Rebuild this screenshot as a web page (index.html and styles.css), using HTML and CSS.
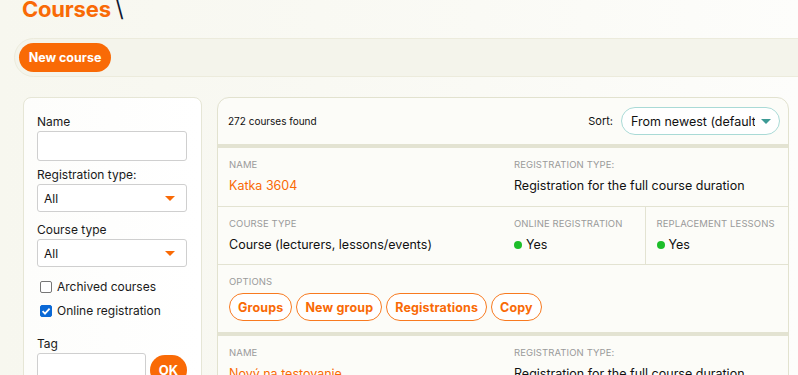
FILE: index.html
```html
<!DOCTYPE html>
<html>
<head>
<meta charset="utf-8">
<link rel="stylesheet" href="styles.css">
</head>
<body>
<div class="page">
  <h1 class="title"><span class="title-main">Courses</span> <span class="title-sep">\</span></h1>
  <div class="toolbar">
    <button class="btn-primary">New course</button>
  </div>
  <div class="content">
    <aside class="filters">
      <label class="f-label">Name</label>
      <input class="f-input" type="text">
      <label class="f-label">Registration type:</label>
      <div class="f-select"><span>All</span><span class="caret"></span></div>
      <label class="f-label">Course type</label>
      <div class="f-select"><span>All</span><span class="caret"></span></div>
      <div class="checks">
        <label class="check"><span class="box"></span>Archived courses</label>
        <label class="check"><span class="box on"><svg viewBox="0 0 12 12" width="12" height="12"><path d="M2.6 6.2 L5 8.6 L9.6 3.6" fill="none" stroke="#fff" stroke-width="1.8"/></svg></span>Online registration</label>
      </div>
      <label class="f-label tag-label">Tag</label>
      <div class="tag-row">
        <input class="f-input tag-input" type="text">
        <button class="btn-ok">OK</button>
      </div>
    </aside>
    <main class="results">
      <div class="results-head">
        <span class="count">272 courses found</span>
        <div class="sort">
          <span class="sort-label">Sort:</span>
          <div class="sort-select"><span class="sort-text">From newest (default)</span><span class="caret teal"></span></div>
        </div>
      </div>
      <div class="course">
        <div class="grid">
          <div class="cell r1 bb">
            <div class="k">NAME</div>
            <div class="v link">Katka 3604</div>
          </div>
          <div class="cell r1 span2 bb">
            <div class="k">REGISTRATION TYPE:</div>
            <div class="v">Registration for the full course duration</div>
          </div>
          <div class="cell r2 bb">
            <div class="k">COURSE TYPE</div>
            <div class="v">Course (lecturers, lessons/events)</div>
          </div>
          <div class="cell r2 bb br">
            <div class="k">ONLINE REGISTRATION</div>
            <div class="v"><span class="dot"></span>Yes</div>
          </div>
          <div class="cell r2 bb">
            <div class="k">REPLACEMENT LESSONS</div>
            <div class="v"><span class="dot"></span>Yes</div>
          </div>
          <div class="cell full">
            <div class="k">OPTIONS</div>
            <div class="opts">
              <button class="btn-opt">Groups</button>
              <button class="btn-opt">New group</button>
              <button class="btn-opt">Registrations</button>
              <button class="btn-opt">Copy</button>
            </div>
          </div>
        </div>
      </div>
      <div class="course">
        <div class="grid">
          <div class="cell r1">
            <div class="k">NAME</div>
            <div class="v link">Nový na testovanie</div>
          </div>
          <div class="cell r1 span2">
            <div class="k">REGISTRATION TYPE:</div>
            <div class="v">Registration for the full course duration</div>
          </div>
        </div>
      </div>
    </main>
  </div>
</div>
</body>
</html>
```
FILE: styles.css
```css
* { box-sizing: border-box; }
html, body {
  margin: 0;
  height: 100%;
  overflow: hidden;
}
body {
  background: linear-gradient(90deg, #f7f7ef 0%, #fafaf5 60%, #fdfdfb 100%);
  font-family: "Inter", "DejaVu Sans", sans-serif;
  color: #111;
}
.page {
  padding-left: 14px;
  width: 830px;
}
.title {
  margin: -7px 0 0 8px;
  height: 45px;
  font-size: 22px;
  line-height: 32px;
  font-weight: 700;
  letter-spacing: -0.2px;
}
.title-main { color: #f96a06; }
.title-sep { color: #0f1730; font-weight: 400; }
.toolbar {
  height: 39px;
  border: 1px solid #ecebdc;
  background: #f4f4eb;
  border-radius: 20px;
  padding: 4px;
  display: flex;
  align-items: center;
}
.btn-primary {
  height: 29px;
  width: 92px;
  border: 0;
  border-radius: 15px;
  background: #f96a06;
  color: #fff;
  font-family: inherit;
  font-weight: 700;
  font-size: 12.5px;
  padding: 0;
}
.content {
  display: flex;
  gap: 15px;
  margin-top: 20px;
  padding-left: 9px;
  align-items: flex-start;
}
.filters {
  width: 179px;
  height: 320px;
  background: linear-gradient(90deg, #fdfdfb, #ffffff);
  border: 1px solid #e6e6d6;
  border-radius: 8px;
  padding: 16px 14px 0 13px;
  display: flex;
  flex-direction: column;
}
.f-label {
  font-size: 12px;
  line-height: 15px;
  color: #1a1a1a;
  margin-bottom: 2px;
}
.f-input {
  width: 150px;
  height: 30px;
  border: 1px solid #cfcfcf;
  border-radius: 3px;
  background: #fff;
  margin: 0 0 6px 0;
  padding: 0;
}
.f-select {
  width: 150px;
  height: 28px;
  border: 1px solid #cfcfcf;
  border-radius: 3px;
  background: #fff;
  display: flex;
  align-items: center;
  justify-content: space-between;
  padding: 0 11px 0 6px;
  font-size: 12px;
  margin-bottom: 10px;
}
.caret {
  width: 0;
  height: 0;
  border-left: 5px solid transparent;
  border-right: 5px solid transparent;
  border-top: 5px solid #f96a06;
}
.caret.teal { border-top-color: #3d9a95; }
.checks {
  display: flex;
  flex-direction: column;
  gap: 10px;
  margin: 3px 0 0 3px;
}
.check {
  display: flex;
  align-items: center;
  gap: 5px;
  font-size: 12px;
  line-height: 14px;
  color: #1a1a1a;
}
.box {
  width: 12px;
  height: 12px;
  border: 1px solid #767676;
  border-radius: 2px;
  background: #fff;
  display: flex;
}
.box.on {
  background: #0b69d6;
  border-color: #0b69d6;
}
.box.on svg { margin: -1px; }
.tag-label { margin-top: 18px; }
.tag-row {
  display: flex;
  gap: 4px;
  align-items: flex-start;
}
.tag-input { width: 109px; }
.btn-ok {
  width: 37px;
  height: 30px;
  margin-top: 2px;
  border: 0;
  border-radius: 15px;
  background: #f96a06;
  color: #fff;
  font-family: inherit;
  font-weight: 700;
  font-size: 13px;
  padding: 0;
}
.results {
  width: 572px;
  height: 300px;
  background: #fcfcf8;
  border: 1px solid #e2e2cf;
  border-radius: 12px;
  overflow: hidden;
}
.results-head {
  height: 50px;
  display: flex;
  align-items: center;
  justify-content: space-between;
  padding: 0 8px 0 10px;
  border-bottom: 4px solid #e3e3d2;
}
.count { font-size: 10px; }
.sort {
  display: flex;
  align-items: center;
  gap: 8px;
}
.sort-label { font-size: 11px; }
.sort-select {
  width: 159px;
  height: 28px;
  border: 1px solid #a9dad6;
  border-radius: 14px;
  background: #fff;
  display: flex;
  align-items: center;
  padding: 0 8px 0 9px;
  gap: 6px;
}
.sort-text {
  flex: 1;
  font-size: 12.5px;
  white-space: nowrap;
  overflow: hidden;
}
.course { border-bottom: 4px solid #e3e3d2; }
.grid {
  display: grid;
  grid-template-columns: 50% 25% 25%;
}
.cell { padding: 11px 11px 0 11px; }
.r1 { height: 59px; }
.r2 { height: 58px; }
.span2 { grid-column: span 2; }
.full { grid-column: 1 / -1; height: 67px; }
.bb { border-bottom: 1px solid #e3e3d2; }
.br { border-right: 1px solid #e3e3d2; }
.k {
  font-size: 9.5px;
  color: #9a9a9a;
  letter-spacing: 0.1px;
  line-height: 12px;
}
.v {
  margin-top: 7px;
  font-size: 12.5px;
  line-height: 16px;
  display: flex;
  align-items: center;
  white-space: nowrap;
}
.link { color: #f96a06; }
.dot {
  width: 8px;
  height: 8px;
  border-radius: 50%;
  background: #1dbe2a;
  margin-right: 4px;
}
.opts {
  display: flex;
  gap: 4px;
  margin-top: 5px;
}
.btn-opt {
  height: 28px;
  border: 1.5px solid #f87a20;
  border-radius: 14px;
  background: #fff;
  color: #f96a06;
  font-family: inherit;
  font-weight: 700;
  font-size: 12.5px;
  padding: 0 8px;
  letter-spacing: 0.15px;
}
```
